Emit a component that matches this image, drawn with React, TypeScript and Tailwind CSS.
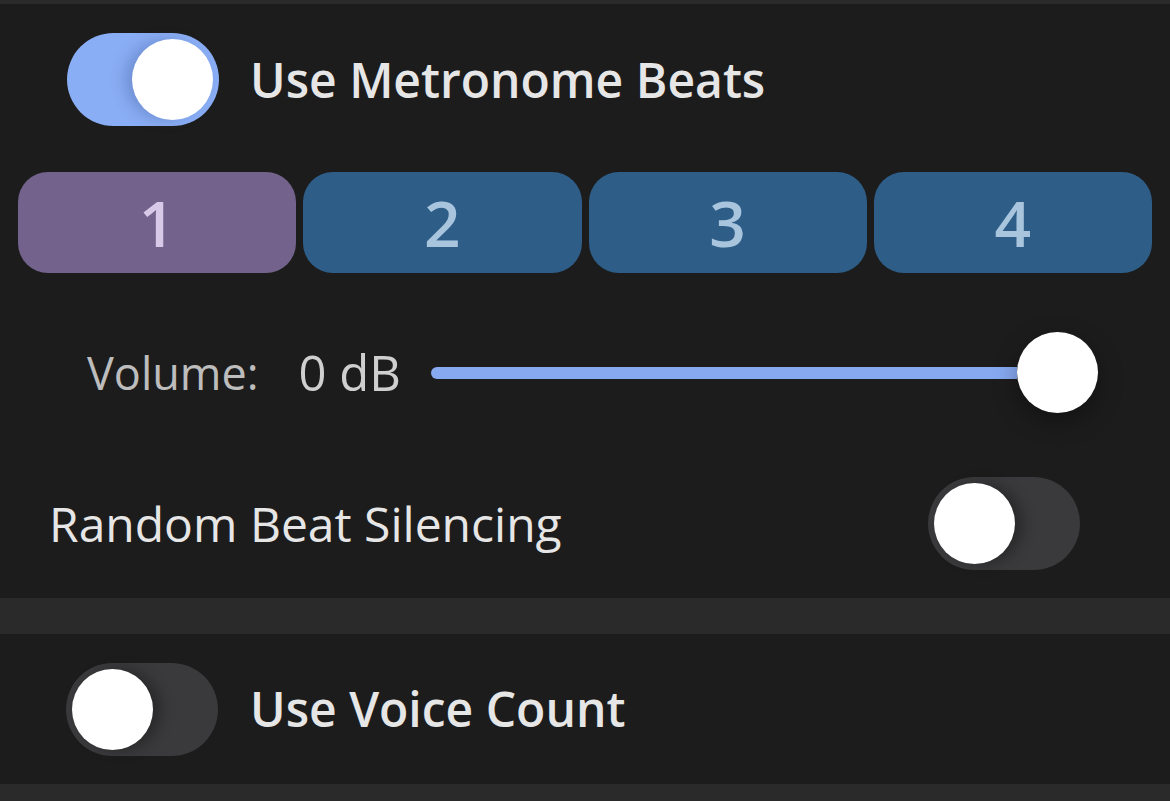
import React from 'react';

function Toggle({ on }: { on: boolean }) {
  return (
    <div
      className={
        'relative flex h-[93px] w-[152px] shrink-0 items-center rounded-full px-[6px] ' +
        (on ? 'justify-end bg-[#8aaef5]' : 'justify-start bg-[#3a3a3c]')
      }
    >
      <div
        className={
          'h-[81px] w-[81px] rounded-full bg-white ' +
          (on ? 'shadow-[-8px_0_14px_rgba(40,60,120,0.25)]' : 'shadow-[8px_0_14px_rgba(0,0,0,0.3)]')
        }
      />
    </div>
  );
}

export default function App() {
  const beats = [1, 2, 3, 4];
  return (
    <div className="flex h-[801px] w-full flex-col bg-[#2a2a2a] pt-[4px] font-['Open_Sans',sans-serif]">
      <div className="flex h-[594px] flex-col bg-[#1c1c1c]">
        <div className="flex items-center gap-[31px] pl-[67px] pt-[29px]">
          <Toggle on />
          <span className="text-[48px] font-semibold text-[#e6e6e6]">Use Metronome Beats</span>
        </div>

        <div className="mt-[46px] grid h-[101px] grid-cols-4 gap-[7px] px-[18px]">
          {beats.map((b) => (
            <button
              key={b}
              className={
                'flex items-center justify-center rounded-[30px] text-[64px] font-semibold ' +
                (b === 1 ? 'bg-[#73628b] text-[#d9c9e8]' : 'bg-[#2e5e88] text-[#a9c5de]')
              }
            >
              {b}
            </button>
          ))}
        </div>

        <div className="mt-[59px] flex h-[81px] items-center pl-[87px] pr-[72px]">
          <span className="text-[45px] text-[#bdbdbd]">Volume:</span>
          <span className="ml-[40px] text-[49px] text-[#cfcfcf]">0 dB</span>
          <div className="ml-[30px] flex flex-1 items-center">
            <div className="h-[12px] flex-1 rounded-l-full bg-[#86a9f0]" />
            <div className="h-[81px] w-[81px] rounded-full bg-white shadow-[0_8px_24px_rgba(0,0,0,0.35)]" />
          </div>
        </div>

        <div className="mt-[64px] flex items-center justify-between pl-[49px] pr-[90px]">
          <span className="text-[48px] text-[#e6e6e6]">Random Beat Silencing</span>
          <Toggle on={false} />
        </div>
      </div>

      <div className="mt-[36px] flex h-[150px] items-center gap-[32px] bg-[#1c1c1c] pl-[66px]">
        <Toggle on={false} />
        <span className="text-[48px] font-semibold text-[#e6e6e6]">Use Voice Count</span>
      </div>
    </div>
  );
}
